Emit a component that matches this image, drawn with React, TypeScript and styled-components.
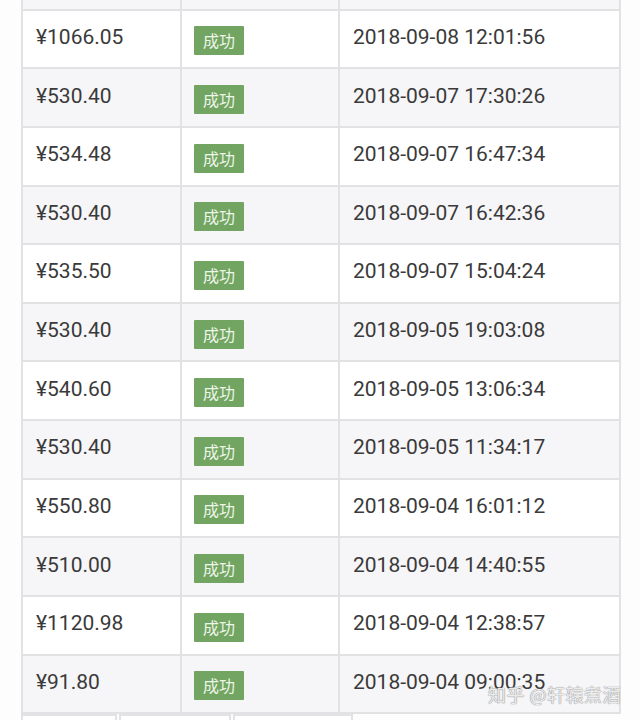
import React from "react";
import styled, { createGlobalStyle } from "styled-components";

const GlobalStyle = createGlobalStyle`
  html, body {
    margin: 0;
    padding: 0;
    background: #fdfdfd;
  }
  body {
    font-family: Roboto, "Noto Sans CJK SC", sans-serif;
    color: #3a3a3a;
  }
`;

const Page = styled.div`
  position: relative;
  width: 640px;
  height: 720px;
  overflow: hidden;
  padding-left: 21px;
  box-sizing: border-box;
`;

const Table = styled.table`
  width: 598px;
  margin-top: -50px;
  border-collapse: collapse;
  table-layout: fixed;
  background: #fff;
`;

const Row = styled.tr<{ $shaded: boolean }>`
  height: 58.64px;
  background: ${(p) => (p.$shaded ? "#f6f5f8" : "#ffffff")};
`;

const Cell = styled.td<{ $w: number }>`
  width: ${(p) => p.$w}px;
  border: 2px solid #e2e2e5;
  padding: 0 0 4px 13px;
  box-sizing: border-box;
  font-size: 21px;
  vertical-align: middle;
  white-space: nowrap;
`;

const BadgeCell = styled(Cell)`
  padding: 4px 0 0 12px;
`;

const Badge = styled.span`
  display: inline-block;
  width: 50px;
  height: 29px;
  line-height: 29px;
  text-align: center;
  background: #71a561;
  color: #eef5e9;
  font-family: "Noto Sans CJK SC", sans-serif;
  font-size: 16px;
  border-radius: 1px;
`;

const Pager = styled.div`
  display: flex;
  gap: 2px;
`;

const PageBox = styled.div<{ $w: number }>`
  width: ${(p) => p.$w}px;
  height: 30px;
  border: 2px solid #e2e2e5;
  box-sizing: border-box;
  background: #fff;
`;

const Watermark = styled.div`
  position: absolute;
  left: 488px;
  top: 681px;
  font-family: "Noto Sans CJK SC", sans-serif;
  font-size: 18px;
  color: rgba(255, 255, 255, 0.85);
  text-shadow: 0 0 1px #8a8a8a, 0 0 1px #8a8a8a;
  white-space: nowrap;
  letter-spacing: 0.5px;
`;

const rows: [string, string][] = [
  ["", ""],
  ["¥1066.05", "2018-09-08 12:01:56"],
  ["¥530.40", "2018-09-07 17:30:26"],
  ["¥534.48", "2018-09-07 16:47:34"],
  ["¥530.40", "2018-09-07 16:42:36"],
  ["¥535.50", "2018-09-07 15:04:24"],
  ["¥530.40", "2018-09-05 19:03:08"],
  ["¥540.60", "2018-09-05 13:06:34"],
  ["¥530.40", "2018-09-05 11:34:17"],
  ["¥550.80", "2018-09-04 16:01:12"],
  ["¥510.00", "2018-09-04 14:40:55"],
  ["¥1120.98", "2018-09-04 12:38:57"],
  ["¥91.80", "2018-09-04 09:00:35"],
];

export default function App() {
  return (
    <Page>
      <GlobalStyle />
      <Table>
        <tbody>
          {rows.map(([amount, time], i) => (
            <Row key={i} $shaded={i % 2 === 0}>
              <Cell $w={159}>{amount}</Cell>
              <BadgeCell $w={158}>{amount && <Badge>成功</Badge>}</BadgeCell>
              <Cell $w={281}>{time}</Cell>
            </Row>
          ))}
        </tbody>
      </Table>
      <Pager>
        <PageBox $w={96} />
        <PageBox $w={112} />
        <PageBox $w={120} />
      </Pager>
      <Watermark>知乎 @轩辕煮酒</Watermark>
    </Page>
  );
}
